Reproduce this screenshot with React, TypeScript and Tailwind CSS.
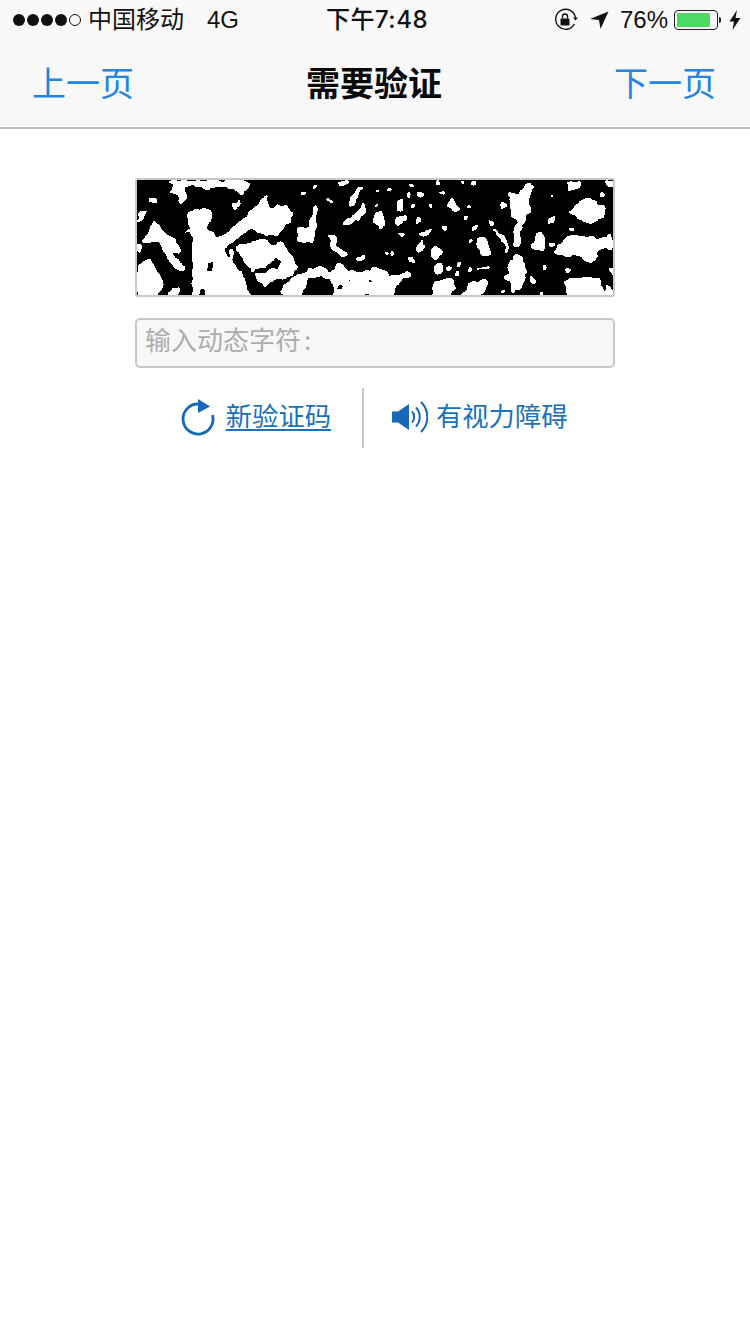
import React from 'react';

const FONT = 'font-["Inter","Noto_Sans_CJK_SC",sans-serif]';

// captcha blobs, in 3x coordinates of the left and right half of the image
const LEFT_BLOBS = [
  '105,30 360,30 350,50 330,68 310,55 280,45 250,45 235,60 205,45 175,40 160,50 165,85 150,100 140,70 120,65 130,45',
  '55,85 75,82 75,95 55,95',
  '20,125 45,115 40,140 22,155',
  '170,120 240,110 240,150 225,170 260,205 310,240 300,270 350,340 355,378 185,378 185,185 150,185 195,170 175,165',
  '260,205 330,150 375,105 405,70 412,110 465,100 485,130 440,190 395,190 360,170 330,190 300,215 275,225',
  '310,225 400,200 420,225 450,210 500,290 470,320 440,315 400,345 370,310',
  '70,150 90,175 130,205 150,240 120,245 155,280 155,300 130,290 100,240 85,210 30,210 50,190',
  '20,285 60,260 70,290 100,340 70,378 20,378',
  '20,215 35,225 20,260',
  '120,345 150,350 130,378 110,378',
  '500,175 530,165 555,95 550,210 502,210',
  '500,310 560,285 600,300 620,270 650,300 750,300 750,378 610,378 600,330 570,310 530,320 510,378 470,378 445,360 480,320',
  '645,100 675,50 695,45 670,85 665,105',
  '630,155 680,125 695,90 700,120 680,145 640,165',
  '725,125 750,120 750,165 730,150',
  '590,195 610,195 620,235 650,245 640,255 610,245',
  '625,30 660,30 630,45',
  '670,260 700,250 695,265 675,268',
  '580,85 605,90 590,100',
  '300,100 325,85 330,100 310,118',
  '545,45 560,40 550,60',
  '505,65 525,60 515,78',
];

const LEFT_HOLES = [
  '340,180 375,185 365,215 315,220 310,208 345,205',
  '400,290 430,255 452,270 440,290 420,295',
  '410,345 445,318 460,340 440,360 420,362',
  '225,270 250,270 245,300 228,300',
  '540,330 570,310 600,350 590,378 530,378',
  '615,345 640,340 630,360 610,358',
  '705,325 725,320 720,340',
  '210,345 235,378 200,378',
  '235,235 245,240 240,248',
  '270,230 295,225 300,265 280,240',
  '360,300 395,285 410,295 385,310',
  '650,320 660,325 650,332',
  '680,370 740,362 740,378 680,378',
];

const RIGHT_BLOBS = [
  '0,285 30,295 75,320 110,295 115,310 80,330 60,378 0,378',
  '5,125 25,125 40,160 25,170 5,150',
  '65,145 100,130 105,145 80,160',
  '75,85 90,85 92,120 78,120',
  '135,135 150,140 150,155 135,155',
  '225,95 240,80 260,115 245,118',
  '195,60 220,60 215,75',
  '40,55 60,45 45,65',
  '135,65 150,60 155,75 140,78',
  '140,185 185,170 160,190 150,200',
  '130,235 155,205 155,225 140,240',
  '175,240 195,225 212,235 195,265 180,255',
  '290,170 320,155 300,180',
  '315,200 340,200 360,250 320,250',
  '185,330 240,320 245,350 230,378 180,378',
  '190,280 205,275 210,300 195,308',
  '265,378 290,340 345,320 340,350 320,378',
  '385,90 405,100 385,118',
  '410,65 440,70 460,40 480,45 465,95 470,120 445,160 440,225 428,225 425,180 440,150 415,135',
  '470,230 500,180 510,185 515,235',
  '525,145 545,135 545,155 525,157',
  '545,240 590,195 640,195 700,200 710,180 730,225 680,235 670,265 640,275 625,250 570,250',
  '585,125 625,90 650,80 695,110 695,135 650,155 610,135',
  '585,35 630,30 605,55 590,60',
  '695,30 730,30 715,50',
  '410,285 430,245 450,260 460,300 445,350 420,365 405,320',
  '465,310 490,325 480,335',
  '575,325 640,315 680,325 695,378 590,378',
  '705,290 730,290 725,310',
  '700,335 735,370 700,378',
  '65,180 100,185 90,195',
  '310,290 355,285 350,292 315,296',
];

const SPECKS: [number, number][] = [
  [10, 55], [105, 65], [120, 100], [170, 100], [285, 100], [275, 135], [210, 165], [290, 205], [38, 240], [55, 240],
  [115, 260], [255, 275], [290, 285], [225, 285], [250, 300], [385, 355], [535, 70], [680, 65], [590, 170], [580, 290],
  [510, 280], [535, 215], [385, 205], [300, 30], [265, 30], [190, 30], [112, 38], [10, 100], [400, 315], [505, 365],
];

function Captcha() {
  return (
    <svg viewBox="0 0 474 114" className="block w-full h-full" shapeRendering="crispEdges" aria-hidden>
      <defs>
        {/* roughens the blob edges, then snaps back to pure black and white */}
        <filter id="rough" x="0" y="0" width="100%" height="100%" colorInterpolationFilters="sRGB">
          <feTurbulence type="fractalNoise" baseFrequency="0.16" numOctaves="2" seed="4" result="noise" />
          <feDisplacementMap in="SourceGraphic" in2="noise" scale="7" xChannelSelector="R" yChannelSelector="G" />
          <feGaussianBlur stdDeviation="0.9" />
          <feComponentTransfer>
            <feFuncR type="discrete" tableValues="0 1 1" />
            <feFuncG type="discrete" tableValues="0 1 1" />
            <feFuncB type="discrete" tableValues="0 1 1" />
          </feComponentTransfer>
        </filter>
      </defs>
      <rect width="474" height="114" fill="#000" />
      <g filter="url(#rough)">
        <rect x="-10" y="-10" width="494" height="134" fill="#000" />
        <g transform="translate(-6 -9) scale(0.3333)" fill="#fff">
          {LEFT_BLOBS.map((p) => (
            <polygon key={p} points={p} />
          ))}
          <g fill="#000">
            {LEFT_HOLES.map((p) => (
              <polygon key={p} points={p} />
            ))}
          </g>
        </g>
        <g transform="translate(234 -9) scale(0.3333)" fill="#fff">
          {RIGHT_BLOBS.map((p) => (
            <polygon key={p} points={p} />
          ))}
          {SPECKS.map(([x, y]) => (
            <rect key={`${x}-${y}`} x={x} y={y} width="10" height="10" />
          ))}
          <path d="M360 170 L398 208 L405 245 M350 150 L365 155" fill="none" stroke="#fff" strokeWidth="6" />
        </g>
      </g>
    </svg>
  );
}

function StatusBar() {
  return (
    <div className={`grid grid-cols-[1fr_auto_1fr] items-center h-[40px] pl-[13px] pr-[9px] text-[24px] leading-none text-[#111] ${FONT}`}>
      <div className="flex items-center">
        <div className="flex gap-[2px]">
          {[0, 1, 2, 3].map((i) => (
            <span key={i} className="w-[12px] h-[12px] rounded-full bg-[#111]" />
          ))}
          <span className="w-[12px] h-[12px] rounded-full border border-[#111]" />
        </div>
        <span className="ml-[7px]">中国移动</span>
        <span className="ml-[23px] font-['Liberation_Sans',sans-serif]">4G</span>
      </div>
      <div className="font-medium tracking-[0.5px]">下午7:48</div>
      <div className="flex items-center justify-end">
        <svg width="24" height="24" viewBox="0 0 24 24" fill="none" aria-hidden>
          <path d="M20.5 16A10 10 0 1 1 21.5 9.5" stroke="#111" strokeWidth="1.4" />
          <path d="M19 9.5h5l-2.500 3z" fill="#111" />
          <rect x="6.500" y="10.500" width="9" height="7" rx="1" fill="#111" />
          <path d="M8.500 10.500V8.500a2.500 2.500 0 0 1 5 0v2" stroke="#111" strokeWidth="1.400" />
        </svg>
        <svg className="ml-[11px]" width="20" height="20" viewBox="0 0 20 20" aria-hidden>
          <path d="M19.500 1.500 L11.500 19 L10 10 L1 9z" fill="#111" />
        </svg>
        <span className="ml-[11px] font-['Liberation_Sans',sans-serif]">76%</span>
        <div className="ml-[6px] flex items-center">
          <div className="w-[44px] h-[20px] rounded-[4px] border border-[#222] p-[2px]">
            <div className="w-[33px] h-full rounded-[1px] bg-[#4cd964]" />
          </div>
          <span className="ml-[1px] w-[2px] h-[6px] rounded-r-full bg-[#222]" />
        </div>
        <svg className="ml-[8px]" width="12" height="20" viewBox="0 0 12 20" aria-hidden>
          <path d="M8 0 L0.500 11.500 H5 L3.500 20 L11.500 8 H6.500z" fill="#111" />
        </svg>
      </div>
    </div>
  );
}

function NavBar() {
  return (
    <div className={`grid grid-cols-[1fr_auto_1fr] items-center h-[89px] pl-[32px] pr-[34px] pt-[1px] border-b-2 border-[#bdbdbd] ${FONT}`}>
      <span className="text-[34px] leading-none text-[#2484e0]">上一页</span>
      <span className="text-[34px] leading-none font-bold text-[#0a0a0a]">需要验证</span>
      <span className="text-[34px] leading-none text-[#2484e0] text-right">下一页</span>
    </div>
  );
}

export default function App() {
  return (
    <div className={`w-[750px] h-[1334px] bg-white overflow-hidden ${FONT}`}>
      <div className="bg-[#f8f8f8]">
        <StatusBar />
        <NavBar />
      </div>

      <div className="w-[480px] mx-auto pt-[49px]">
        <div className="h-[119px] border-2 border-[#c8c8c8] rounded-[3px] overflow-hidden">
          <Captcha />
        </div>

        <div className="mt-[21px] h-[50px] flex items-center px-[8px] pb-[5px] bg-[#f7f7f7] border-2 border-[#c8c8c8] rounded-[5px] text-[26px] leading-none text-[#adadad]">
          输入动态字符<span className="ml-[3px]">:</span>
        </div>

        <div className="mt-[20px] flex items-center h-[60px] text-[26.300px] leading-none text-[#1a72bb]">
          <div className="w-[227px] flex items-center justify-end pr-[31px] pb-[2px]">
            <svg width="34" height="38" viewBox="0 0 34 38" fill="none" className="mt-[2px]" aria-hidden>
              <path d="M17 5A15 15 0 1 0 31.500 16" stroke="#1569b8" strokeWidth="2.800" />
              <path d="M17 0 L29 7.500 L17 14z" fill="#1569b8" />
            </svg>
            <span className="ml-[11px] underline underline-offset-[3px] decoration-2">新验证码</span>
          </div>
          <div className="w-[2px] h-[60px] bg-[#c8c8c8]" />
          <div className="flex items-center pl-[28px] pb-[2px]">
            <svg width="36" height="34" viewBox="0 0 36 34" fill="none" aria-hidden>
              <path d="M0 11.500H6L17 4V30L6 22.500H0z" fill="#1569b8" />
              <path d="M20 11.500A8 8 0 0 1 20 22.500M24 7.500A14 14 0 0 1 24 26.500M29 2A21 21 0 0 1 29 32" stroke="#1569b8" strokeWidth="2" />
            </svg>
            <span className="ml-[8px]">有视力障碍</span>
          </div>
        </div>
      </div>
    </div>
  );
}
